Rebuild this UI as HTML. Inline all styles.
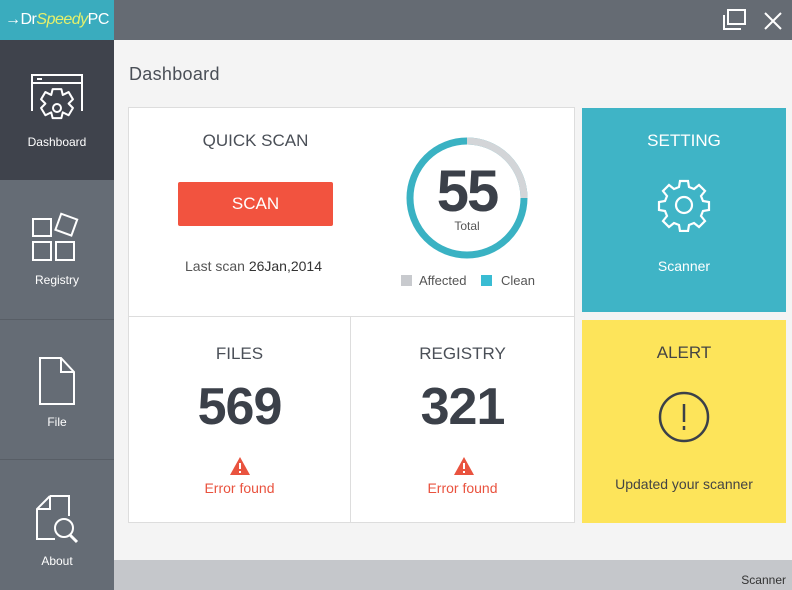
<!DOCTYPE html>
<html><head><meta charset="utf-8"><style>
*{margin:0;padding:0;box-sizing:border-box}
body{width:792px;height:590px;overflow:hidden;background:#f4f4f4;font-family:"Liberation Sans",sans-serif;position:relative}
.abs{position:absolute}
.top{left:0;top:0;width:792px;height:40px;background:#656b73}
.logo{left:0;top:0;width:114px;height:40px;background:#3aacbe;color:#fff;font-size:16px;line-height:40px;padding-left:5px;letter-spacing:-0.5px}
.logo i{color:#e6f06a}
.side{left:0;top:40px;width:114px;height:550px;background:#656c75}
.item{position:absolute;left:0;width:114px;color:#fff;font-size:12px;text-align:center;border-bottom:1px solid #585e66}
.item span{position:absolute;left:0;right:0}
.card{background:#fff;border:1px solid #ddd}
.t{color:#4a4f57;font-size:17px;text-align:center;position:absolute;left:0;right:0}
.big{color:#3b4049;font-size:52px;font-weight:bold;text-align:center;position:absolute;left:0;right:0;letter-spacing:-1px}
.err{color:#e9533f;font-size:14px;text-align:center;position:absolute;left:0;right:0}
</style></head><body>
<div class="abs top"></div>
<div class="abs logo">&#8594;Dr<i>Speedy</i>PC</div>
<svg class="abs" style="left:722px;top:8px" width="28" height="24" viewBox="0 0 28 24"><rect x="6" y="2" width="17" height="14" fill="none" stroke="#fff" stroke-width="2"/><path d="M2 7v14h17" fill="none" stroke="#fff" stroke-width="2"/></svg>
<svg class="abs" style="left:763px;top:11px" width="20" height="20"><path d="M2 2L18 18M18 2L2 18" stroke="#fff" stroke-width="2"/></svg>
<div class="abs side"></div>
<div class="item" style="top:40px;height:140px;background:#3f434c;border:0">
<svg style="position:absolute;left:31px;top:34px" width="52" height="56" viewBox="0 0 52 56" fill="none" stroke="#fff" stroke-width="2"><path d="M1 37V1h50v36M1 9h50M6 5h5"/><circle cx="26" cy="34" r="4"/><g transform="translate(26 34) scale(1.45) translate(-26 -34)" stroke-width="1.4"><path d="M23 21h6l1 4 4-2 3 5-3 3 3 3-3 5-4-2-1 4h-6l-1-4-4 2-3-5 3-3-3-3 3-5 4 2z" stroke-linejoin="round"/></g></svg>
<span style="top:95px">Dashboard</span></div>
<div class="item" style="top:180px;height:140px">
<svg style="position:absolute;left:32px;top:32px" width="52" height="52" viewBox="0 0 52 52" fill="none" stroke="#fff" stroke-width="2"><rect x="1" y="7" width="18" height="17"/><rect x="1" y="30" width="18" height="18"/><rect x="24" y="30" width="18" height="18"/><rect x="26" y="4" width="17" height="17" transform="rotate(20 34 12)"/></svg>
<span style="top:93px">Registry</span></div>
<div class="item" style="top:320px;height:140px">
<svg style="position:absolute;left:38px;top:36px" width="38" height="50" viewBox="0 0 38 50" fill="none" stroke="#fff" stroke-width="2"><path d="M2 2h21l13 14v32H2zM23 2v14h13"/></svg>
<span style="top:95px">File</span></div>
<div class="item" style="top:460px;height:130px;border:0">
<svg style="position:absolute;left:33px;top:34px" width="48" height="50" viewBox="0 0 48 50" fill="none" stroke="#fff" stroke-width="2"><path d="M17 2h19v20M17 2L4 15v30h18M17 2v13H4"/><circle cx="31" cy="34" r="9"/><path d="M37 41l7 7" stroke-width="3"/></svg>
<span style="top:94px">About</span></div>
<div class="abs" style="left:129px;top:64px;color:#4a4f57;font-size:18px;letter-spacing:0.3px">Dashboard</div>
<div class="abs card" style="left:128px;top:107px;width:447px;height:210px">
<div class="t" style="top:23px;right:192px;left:0">QUICK SCAN</div>
<div class="abs" style="left:49px;top:74px;width:155px;height:44px;background:#f2533f;border-radius:2px;color:#fff;font-size:17px;text-align:center;line-height:44px">SCAN</div>
<div class="abs" style="left:56px;top:150px;font-size:14px;color:#555">Last scan <b style="font-weight:normal;color:#333">26Jan,2014</b></div>
<svg class="abs" style="left:275px;top:27px" width="126" height="126"><circle cx="63" cy="63" r="57" fill="none" stroke="#3ab2c3" stroke-width="7"/><path d="M63 6A57 57 0 0 1 120 63" fill="none" stroke="#d3d5d8" stroke-width="7"/></svg>
<div class="abs" style="left:275px;top:54px;width:126px;text-align:center;color:#3b4049;font-size:58px;font-weight:bold;letter-spacing:-2px;line-height:60px">55</div>
<div class="abs" style="left:275px;top:111px;width:126px;text-align:center;color:#555;font-size:12px">Total</div>
<div class="abs" style="left:272px;top:167px;width:11px;height:11px;background:#c8cace"></div>
<div class="abs" style="left:290px;top:165px;font-size:13px;color:#555">Affected</div>
<div class="abs" style="left:352px;top:167px;width:11px;height:11px;background:#39bcd3"></div>
<div class="abs" style="left:372px;top:165px;font-size:13px;color:#555">Clean</div>
</div>
<div class="abs card" style="left:128px;top:316px;width:223px;height:207px">
<div class="t" style="top:27px">FILES</div>
<div class="big" style="top:60px">569</div>
<svg style="position:absolute;left:100px;top:139px" width="22" height="20"><path d="M11 1L21 19H1z" fill="#e9533f"/><path d="M11 7v6M11 15v2" stroke="#fff" stroke-width="2"/></svg>
<div class="err" style="top:163px">Error found</div></div>
<div class="abs card" style="left:350px;top:316px;width:225px;height:207px">
<div class="t" style="top:27px">REGISTRY</div>
<div class="big" style="top:60px">321</div>
<svg style="position:absolute;left:102px;top:139px" width="22" height="20"><path d="M11 1L21 19H1z" fill="#e9533f"/><path d="M11 7v6M11 15v2" stroke="#fff" stroke-width="2"/></svg>
<div class="err" style="top:163px">Error found</div></div>
<div class="abs" style="left:582px;top:108px;width:204px;height:204px;background:#3fb4c6">
<div class="t" style="top:23px;color:#fff">SETTING</div>
<svg style="position:absolute;left:75px;top:70px" width="54" height="54" viewBox="0 0 54 54" fill="none" stroke="#fff" stroke-width="2.2"><circle cx="27" cy="27" r="8"/><path d="M23 3h8l1 6 5 2 5-4 6 6-4 5 2 5 6 1v8l-6 1-2 5 4 5-6 6-5-4-5 2-1 6h-8l-1-6-5-2-5 4-6-6 4-5-2-5-6-1v-8l6-1 2-5-4-5 6-6 5 4 5-2z"/></svg>
<div style="position:absolute;left:0;right:0;top:150px;text-align:center;color:#fff;font-size:14px">Scanner</div></div>
<div class="abs" style="left:582px;top:320px;width:204px;height:203px;background:#fde45a">
<div class="t" style="top:23px;color:#444">ALERT</div>
<svg style="position:absolute;left:75px;top:70px" width="54" height="54"><circle cx="27" cy="27" r="24" fill="none" stroke="#3b4049" stroke-width="2.5"/><path d="M27 14v18M27 36v4" stroke="#3b4049" stroke-width="2.5"/></svg>
<div style="position:absolute;left:0;right:0;top:156px;text-align:center;color:#444;font-size:14px">Updated your scanner</div></div>
<div class="abs" style="left:114px;top:560px;width:678px;height:30px;background:#c5c7cb"></div>
<div class="abs" style="right:6px;top:573px;font-size:12px;color:#333">Scanner</div>
</body></html>
